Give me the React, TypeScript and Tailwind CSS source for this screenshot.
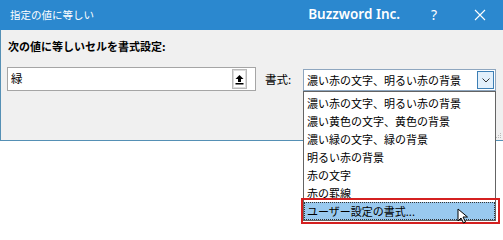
import React from "react";

const jp = { fontFamily: '"Noto Sans CJK JP", "Noto Sans", sans-serif' };

const items = [
  "濃い赤の文字、明るい赤の背景",
  "濃い黄色の文字、黄色の背景",
  "濃い緑の文字、緑の背景",
  "明るい赤の背景",
  "赤の文字",
  "赤の罫線",
  "ユーザー設定の書式...",
];

export default function App() {
  return (
    <div className="relative w-[503px] h-[240px] bg-white overflow-hidden text-black" style={jp}>
      <div className="flex flex-col h-[141px]">
        <div className="h-[30px] bg-[#2b88cf] flex items-center text-white shrink-0">
          <span className="pl-[10px] text-[10.5px] leading-none">指定の値に等しい</span>
          <div className="flex-1" />
          <span className="text-[13.5px] font-semibold mr-[11px] leading-none" style={{ fontFamily: '"Noto Sans", sans-serif' }}>
            Buzzword Inc.
          </span>
          <span className="w-[46px] text-center text-[14px] leading-none" style={{ fontFamily: '"Noto Sans", sans-serif' }}>?</span>
          <span className="w-[46px] flex justify-center">
            <svg width="12" height="12" viewBox="0 0 12 12">
              <path d="M1 1 L11 11 M11 1 L1 11" stroke="white" strokeWidth="1.1" />
            </svg>
          </span>
        </div>
        <div className="flex-1 bg-[#f0f0f0] border-l border-b border-[#5590b5] relative">
          <div className="pl-[7px] mt-[8px] h-[16px] leading-[16px] text-[11px] font-bold">
            次の値に等しいセルを書式設定:
          </div>
          <div className="flex items-start mt-[13px] pl-[6px]">
            <div className="w-[249px] h-[24px] border border-[#a5a5a5] bg-white flex items-center">
              <span className="pl-[3px] text-[11.5px] flex-1">緑</span>
              <div className="w-[15px] h-[20px] mr-[8px] border border-[#b9b9b9] bg-[#dcdcdc] flex items-center justify-center">
                <div className="w-[11px] h-[16px] bg-white flex items-center justify-center">
                  <svg width="9" height="11" viewBox="0 0 9 11">
                    <path d="M4.5 1 L8.5 5 L6 5 L6 8 L3 8 L3 5 L0.5 5 Z" fill="black" />
                    <rect x="0.5" y="9" width="8" height="1.5" fill="black" />
                  </svg>
                </div>
              </div>
            </div>
            <span className="ml-[9px] w-[38px] h-[24px] leading-[24px] text-[11.5px]">書式:</span>
            <div className="mt-[2px] w-[193px] h-[22px] border border-[#8ea6bf] bg-white flex items-center">
              <span className="pl-[3px] text-[11px] flex-1 whitespace-nowrap">濃い赤の文字、明るい赤の背景</span>
              <div className="w-[17px] h-[18px] mr-[1px] border border-[#3d7fb5] bg-[#e3f0fb] flex items-center justify-center">
                <svg width="8" height="5" viewBox="0 0 8 5">
                  <path d="M0.5 0.5 L4 4 L7.5 0.5" stroke="#333" strokeWidth="1" fill="none" />
                </svg>
              </div>
            </div>
          </div>
          <div className="absolute right-[2px] bottom-[2px] flex flex-col gap-[1px]">
            <div className="flex justify-end gap-[1px]"><span className="w-[1px] h-[1px] bg-[#bbb]" /></div>
            <div className="flex justify-end gap-[1px]"><span className="w-[1px] h-[1px] bg-[#bbb]" /><span className="w-[1px] h-[1px] bg-[#bbb]" /></div>
            <div className="flex justify-end gap-[1px]"><span className="w-[1px] h-[1px] bg-[#bbb]" /><span className="w-[1px] h-[1px] bg-[#bbb]" /><span className="w-[1px] h-[1px] bg-[#bbb]" /></div>
          </div>
        </div>
      </div>

      <div className="absolute left-[303px] top-[91px] w-[193px] h-[130px] border border-[#646464] bg-white pt-[2px]">
        {items.map((t, i) =>
          i === items.length - 1 ? (
            <div
              key={i}
              className="h-[18px] bg-[#99c9ef] border border-dotted border-[#333] pl-[2px] text-[11px] leading-[16px] whitespace-nowrap"
            >
              {t}
            </div>
          ) : (
            <div key={i} className="h-[18px] pl-[3px] text-[11px] leading-[18px] whitespace-nowrap">
              {t}
            </div>
          )
        )}
      </div>

      <div className="absolute left-[301px] top-[198px] w-[199px] h-[26px] border-2 border-[#d42020]" />

      <svg className="absolute left-[457px] top-[208px]" width="14" height="16" viewBox="0 0 14 16">
        <path d="M1 1 L1 13 L4 10 L6.5 15 L8.5 14 L6 9 L10.5 9 Z" fill="white" stroke="black" strokeWidth="1" strokeLinejoin="round" />
      </svg>
    </div>
  );
}
